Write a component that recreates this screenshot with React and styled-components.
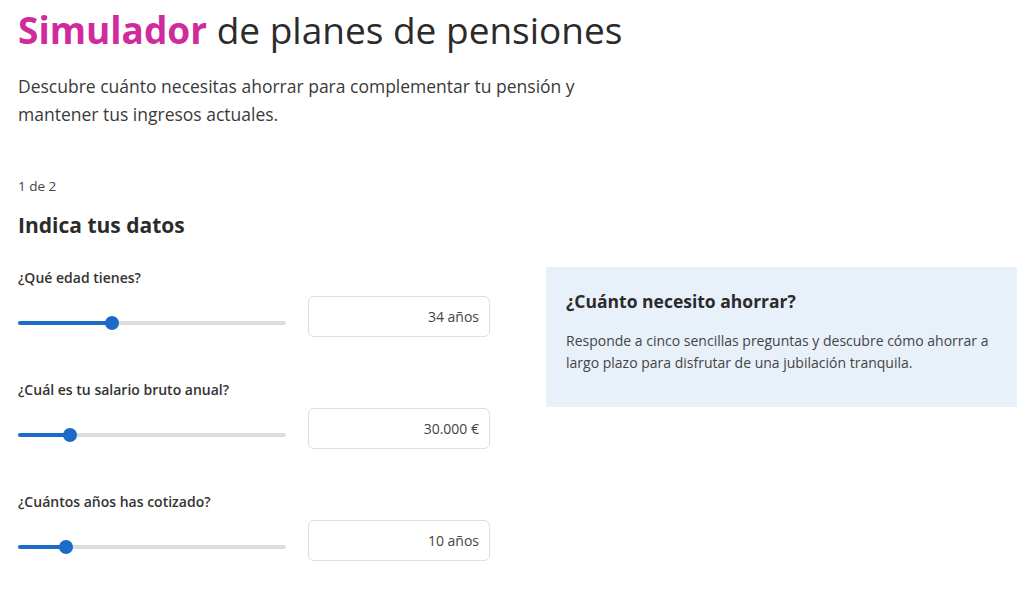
import React from "react";
import styled, { createGlobalStyle } from "styled-components";

const GlobalStyle = createGlobalStyle`
    body {
        margin: 0;
        background: #ffffff;
        font-family: "Open Sans", "Noto Sans", sans-serif;
        color: #2b2b2b;
    }
`;

const Page = styled.div`
    padding: 8px 18px 30px 18px;
`;

const Title = styled.h1`
    margin: 0;
    font-size: 37px;
    line-height: 44px;
    font-weight: 400;
    color: #2b2b2b;
    span {
        font-weight: 700;
        color: #d02b9d;
    }
`;

const Lead = styled.p`
    margin: 20px 0 0 0;
    max-width: 590px;
    font-size: 17.5px;
    line-height: 28px;
    color: #3a3a3a;
`;

const Step = styled.div`
    margin-top: 48px;
    font-size: 13.5px;
    line-height: 20px;
    color: #444;
`;

const Heading = styled.h2`
    margin: 15px 0 0 0;
    font-size: 21px;
    line-height: 28px;
    font-weight: 700;
    color: #2b2b2b;
`;

const Layout = styled.div`
    margin-top: 29px;
    display: grid;
    grid-template-columns: 472px 471px;
    column-gap: 56px;
    align-items: start;
`;

const Fields = styled.div`
    display: flex;
    flex-direction: column;
    gap: 43px;
`;

const Field = styled.div`
    display: flex;
    flex-direction: column;
    gap: 8px;
`;

const Label = styled.label`
    font-size: 14px;
    line-height: 20px;
    font-weight: 600;
    color: #333;
`;

const Row = styled.div`
    display: flex;
    align-items: flex-start;
    gap: 22px;
`;

const Slider = styled.div`
    position: relative;
    width: 268px;
    height: 14px;
    margin-top: 20px;
`;

const Track = styled.div`
    position: absolute;
    left: 0;
    right: 0;
    top: 5px;
    height: 4px;
    border-radius: 2px;
    background: #dcdcdc;
`;

const Fill = styled.div`
    height: 100%;
    border-radius: 2px;
    background: #1b6bc8;
`;

const Thumb = styled.div`
    position: absolute;
    top: 0;
    width: 14px;
    height: 14px;
    margin-left: -7px;
    border-radius: 50%;
    background: #1b6bc8;
`;

const ValueBox = styled.div`
    box-sizing: border-box;
    width: 182px;
    height: 41px;
    border: 1px solid #dedede;
    border-radius: 6px;
    padding: 0 10px;
    display: flex;
    align-items: center;
    justify-content: flex-end;
    font-size: 14px;
    color: #444;
`;

const Card = styled.aside`
    margin-top: -1px;
    background: #e8f0fa;
    padding: 22px 20px 33px 20px;
`;

const CardTitle = styled.h3`
    margin: 0;
    font-size: 17.5px;
    line-height: 24px;
    font-weight: 700;
    color: #2b2b2b;
`;

const CardText = styled.p`
    margin: 17px 0 0 0;
    font-size: 14px;
    line-height: 22px;
    color: #444;
`;

const fields = [
    { label: "¿Qué edad tienes?", value: "34 años", pct: 35 },
    { label: "¿Cuál es tu salario bruto anual?", value: "30.000 €", pct: 19.4 },
    { label: "¿Cuántos años has cotizado?", value: "10 años", pct: 17.9 },
];

const RangeSlider = ({ pct }) => (
    <Slider>
        <Track>
            <Fill style={{ width: `${pct}%` }} />
        </Track>
        <Thumb style={{ left: `${pct}%` }} />
    </Slider>
);

export default function App() {
    return (
        <>
            <GlobalStyle />
            <Page>
                <Title>
                    <span>Simulador</span> de planes de pensiones
                </Title>
                <Lead>
                    Descubre cuánto necesitas ahorrar para complementar tu pensión y mantener tus ingresos
                    actuales.
                </Lead>
                <Step>1 de 2</Step>
                <Heading>Indica tus datos</Heading>
                <Layout>
                    <Fields>
                        {fields.map(f => (
                            <Field key={f.label}>
                                <Label>{f.label}</Label>
                                <Row>
                                    <RangeSlider pct={f.pct} />
                                    <ValueBox>{f.value}</ValueBox>
                                </Row>
                            </Field>
                        ))}
                    </Fields>
                    <Card>
                        <CardTitle>¿Cuánto necesito ahorrar?</CardTitle>
                        <CardText>
                            Responde a cinco sencillas preguntas y descubre cómo ahorrar a largo plazo para
                            disfrutar de una jubilación tranquila.
                        </CardText>
                    </Card>
                </Layout>
            </Page>
        </>
    );
}
